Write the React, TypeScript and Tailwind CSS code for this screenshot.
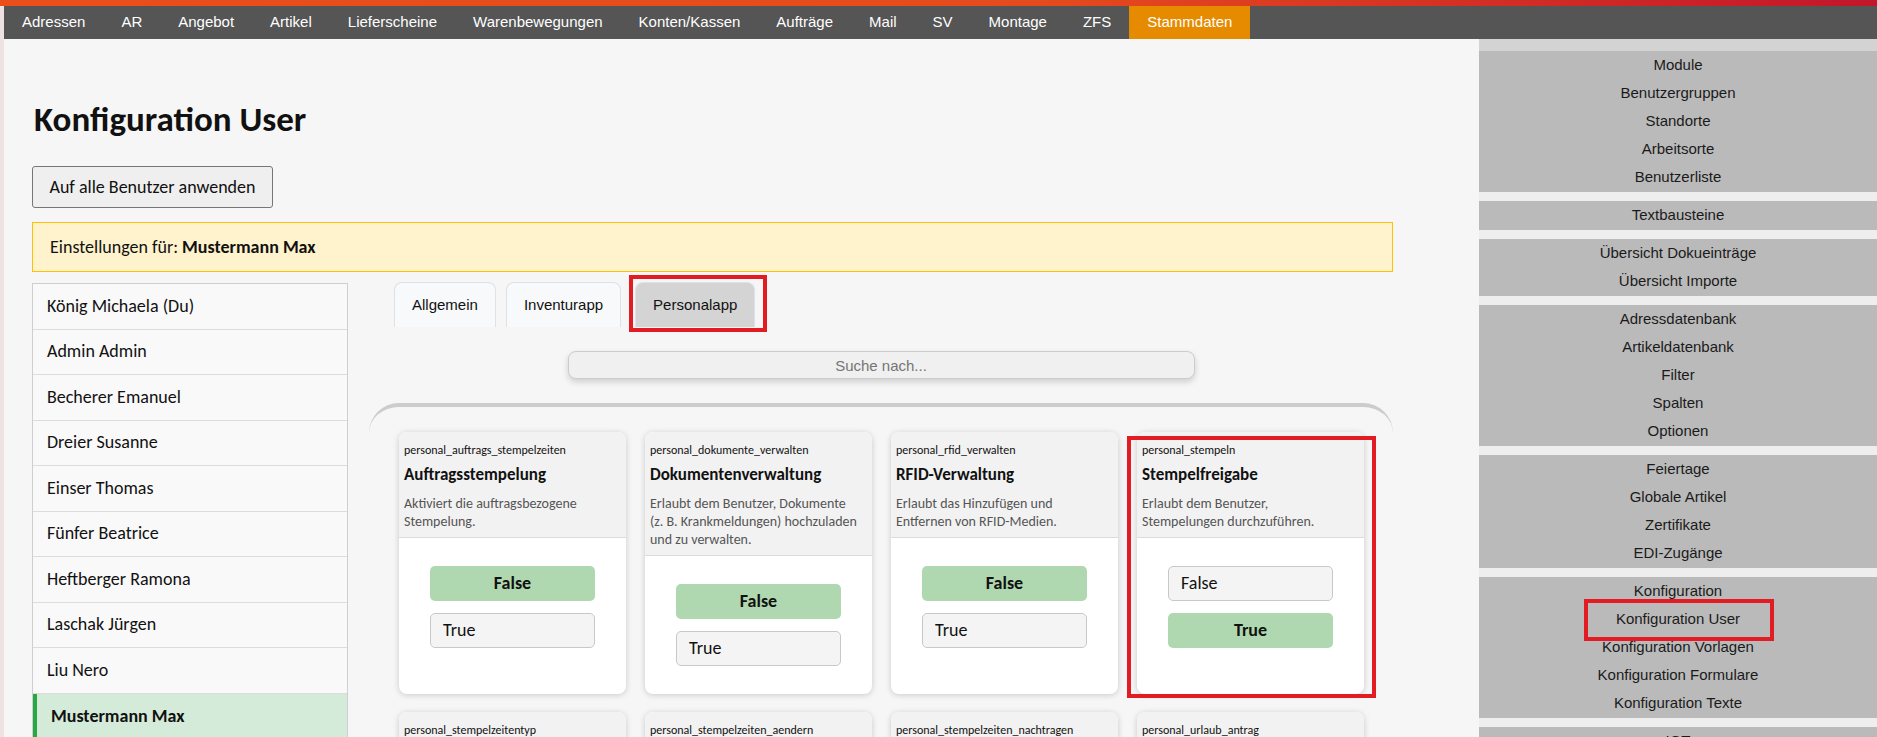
import { useState } from 'react'

const ARIAL = "font-['Liberation_Sans',Arial,sans-serif]"
const CALIBRI = "font-['Carlito',Lato,'Noto_Sans',sans-serif]"

const navItems = [
  'Adressen', 'AR', 'Angebot', 'Artikel', 'Lieferscheine', 'Warenbewegungen',
  'Konten/Kassen', 'Aufträge', 'Mail', 'SV', 'Montage', 'ZFS', 'Stammdaten',
]

const users = [
  'König Michaela (Du)', 'Admin Admin', 'Becherer Emanuel', 'Dreier Susanne', 'Einser Thomas',
  'Fünfer Beatrice', 'Heftberger Ramona', 'Laschak Jürgen', 'Liu Nero', 'Mustermann Max',
]

const sideGroups = [
  ['Module', 'Benutzergruppen', 'Standorte', 'Arbeitsorte', 'Benutzerliste'],
  ['Textbausteine'],
  ['Übersicht Dokueinträge', 'Übersicht Importe'],
  ['Adressdatenbank', 'Artikeldatenbank', 'Filter', 'Spalten', 'Optionen'],
  ['Feiertage', 'Globale Artikel', 'Zertifikate', 'EDI-Zugänge'],
  ['Konfiguration', 'Konfiguration User', 'Konfiguration Vorlagen', 'Konfiguration Formulare', 'Konfiguration Texte'],
  ['IOT'],
]

interface Setting {
  key: string
  title: string
  desc: string[]
  value: boolean
  marked?: boolean
}

const settings: Setting[] = [
  { key: 'personal_auftrags_stempelzeiten', title: 'Auftragsstempelung', desc: ['Aktiviert die auftragsbezogene', 'Stempelung.'], value: false },
  { key: 'personal_dokumente_verwalten', title: 'Dokumentenverwaltung', desc: ['Erlaubt dem Benutzer, Dokumente', '(z. B. Krankmeldungen) hochzuladen', 'und zu verwalten.'], value: false },
  { key: 'personal_rfid_verwalten', title: 'RFID-Verwaltung', desc: ['Erlaubt das Hinzufügen und', 'Entfernen von RFID-Medien.'], value: false },
  { key: 'personal_stempeln', title: 'Stempelfreigabe', desc: ['Erlaubt dem Benutzer,', 'Stempelungen durchzuführen.'], value: true, marked: true },
  { key: 'personal_stempelzeitentyp', title: 'Stempelzeitentyp', desc: ['Erlaubt die Auswahl des', 'Stempelzeitentyps.'], value: false },
  { key: 'personal_stempelzeiten_aendern', title: 'Stempelzeiten ändern', desc: ['Erlaubt das Ändern von', 'Stempelzeiten.'], value: false },
  { key: 'personal_stempelzeiten_nachtragen', title: 'Stempelzeiten nachtragen', desc: ['Erlaubt das Nachtragen von', 'Stempelzeiten.'], value: false },
  { key: 'personal_urlaub_antrag', title: 'Urlaubsantrag', desc: ['Erlaubt das Stellen von', 'Urlaubsanträgen.'], value: false },
]

function ValueButton({ label, active }: { label: string; active: boolean }) {
  return active ? (
    <button className={`w-[165px] h-[35px] rounded-[5px] bg-[#b0d8b0] text-[18px] font-bold text-[#111] ${CALIBRI}`}>
      {label}
    </button>
  ) : (
    <button className={`w-[165px] h-[35px] rounded-[5px] bg-[#f4f4f4] border border-[#c8c8c8] text-left pl-[12px] text-[18px] text-[#111] ${CALIBRI}`}>
      {label}
    </button>
  )
}

function SettingCard({ s }: { s: Setting }) {
  return (
    <div className="relative">
      <div className="w-[227px] h-full rounded-[8px] bg-white shadow-[0_1px_6px_rgba(0,0,0,0.18)] overflow-hidden flex flex-col">
        <div className={`bg-[#f2f2f2] border-b border-[#dcdcdc] pt-[10px] px-[5px] pb-[6px] ${CALIBRI}`}>
          <div className="text-[12px] leading-[16px] text-[#111] whitespace-nowrap">{s.key}</div>
          <div className="mt-[6px] text-[17px] leading-[22px] font-bold text-[#111] whitespace-nowrap">{s.title}</div>
          <div className="mt-[9px] text-[14px] leading-[18px] text-[#555]">
            {s.desc.map(line => (
              <div key={line} className="whitespace-nowrap">{line}</div>
            ))}
          </div>
        </div>
        <div className="flex-1 flex flex-col items-center gap-[12px] py-[28px]">
          <ValueButton label="False" active={!s.value} />
          <ValueButton label="True" active={s.value} />
        </div>
      </div>
      {s.marked && (
        <div className="absolute left-[-10px] right-[-12px] top-[4px] bottom-[-4px] border-[4px] border-[#e31b23] pointer-events-none" />
      )}
    </div>
  )
}

export default function App() {
  const [selectedUser, setSelectedUser] = useState('Mustermann Max')
  const [tab, setTab] = useState('Personalapp')

  return (
    <div className="w-[1877px] h-[737px] overflow-hidden flex flex-col bg-[#f6f6f6]">
      {/* top accent bar */}
      <div className="h-[6px] shrink-0 bg-[linear-gradient(to_right,#e94e1b_0%,#e64b1d_55%,#c2162b_100%)]" />

      <div className="flex flex-1 min-h-0">
        <div className="w-[4px] shrink-0 bg-[#efe2e2]" />

        <div className="flex-1 flex flex-col min-w-0">
          <nav className={`h-[33px] shrink-0 bg-[#555555] flex ${ARIAL}`}>
            {navItems.map(item => (
              <a
                key={item}
                className={`px-[18px] flex items-center text-[15px] text-white ${item === 'Stammdaten' ? 'bg-[#e68a00]' : ''}`}
              >
                {item}
              </a>
            ))}
          </nav>

          <div className="flex flex-1 min-h-0">
            {/* main */}
            <main className="flex-1 min-w-0">
              <div className={`ml-[28px] w-[1361px] ${CALIBRI}`}>
                <h1 className="mt-[58px] ml-[2px] text-[35px] leading-[44px] font-bold text-[#111]">Konfiguration User</h1>

                <button className="mt-[25px] w-[241px] h-[42px] border border-[#767676] rounded-[3px] bg-[#efefef] text-[18px] text-[#111]">
                  Auf alle Benutzer anwenden
                </button>

                <div className="mt-[14px] h-[50px] flex items-center pl-[17px] bg-[#fff3cd] border border-[#ffc107] text-[18px] text-[#111]">
                  Einstellungen für:&nbsp;<span className="font-bold">Mustermann Max</span>
                </div>

                <div className="mt-[10px] flex gap-[21px]">
                  {/* user list */}
                  <div className="w-[316px] shrink-0 mt-px self-start bg-[#f9f9f9] border border-[#cfcfcf]">
                    {users.map(u => {
                      const active = u === selectedUser
                      return (
                        <div
                          key={u}
                          onClick={() => setSelectedUser(u)}
                          className={
                            active
                              ? 'h-[45.5px] flex items-center pl-[14px] border-l-[4px] border-[#28a745] bg-[#d4ebd9] text-[18px] font-bold text-[#111]'
                              : 'h-[45.5px] flex items-center pl-[14px] border-b border-[#dcdcdc] text-[18px] text-[#111]'
                          }
                        >
                          {u}
                        </div>
                      )
                    })}
                  </div>

                  {/* settings area */}
                  <div className="w-[1024px] shrink-0">
                    <div className={`flex gap-[10px] pl-[25px] ${ARIAL}`}>
                      {['Allgemein', 'Inventurapp', 'Personalapp'].map(t => (
                        <div key={t} className={t === 'Personalapp' ? 'relative ml-[4px]' : 'relative'}>
                          <button
                            onClick={() => setTab(t)}
                            className={`h-[45px] px-[17px] rounded-t-[8px] border border-b-0 border-[#dee2e6] text-[15px] text-[#111] ${tab === t ? 'bg-[#d4d4d4]' : 'bg-[#f8f9fa]'}`}
                          >
                            {t}
                          </button>
                          {t === 'Personalapp' && (
                            <div className="absolute left-[-6px] right-[-12px] top-[-7px] bottom-[-5px] border-[4px] border-[#e31b23] pointer-events-none" />
                          )}
                        </div>
                      ))}
                    </div>

                    <div className="mt-[24px] flex justify-center">
                      <input
                        placeholder="Suche nach..."
                        className={`w-[627px] h-[28px] rounded-[8px] bg-[#f0f0f0] border border-[#cccccc] shadow-[0_3px_6px_rgba(0,0,0,0.16)] text-center text-[15px] placeholder:text-[#757575] outline-none ${ARIAL}`}
                      />
                    </div>

                    <div className="mt-[24px] border-t-[4px] border-[#cccccc] rounded-t-[30px] pt-[25px] px-[30px]">
                      <div className="grid grid-cols-[repeat(4,227px)] gap-x-[19px] gap-y-[18px]">
                        {settings.map(s => (
                          <SettingCard key={s.key} s={s} />
                        ))}
                      </div>
                    </div>
                  </div>
                </div>
              </div>
            </main>

            {/* right sidebar */}
            <aside className={`w-[398px] shrink-0 bg-[#eeeeee] ${ARIAL}`}>
              <div className="h-[12px] bg-[#d3d3d3]" />
              <div className="flex flex-col gap-[9px]">
                {sideGroups.map((g, i) => (
                  <div key={i} className="bg-[#bababa] pb-px">
                    {g.map(item => (
                      <div key={item} className="relative h-[28px] flex items-center justify-center text-[15px] text-[#1a1a1a]">
                        {item}
                        {item === 'Konfiguration User' && (
                          <div className="absolute left-[105px] w-[190px] top-[-6px] bottom-[-8px] border-[4px] border-[#e31b23] pointer-events-none" />
                        )}
                      </div>
                    ))}
                  </div>
                ))}
              </div>
            </aside>
          </div>
        </div>
      </div>
    </div>
  )
}
